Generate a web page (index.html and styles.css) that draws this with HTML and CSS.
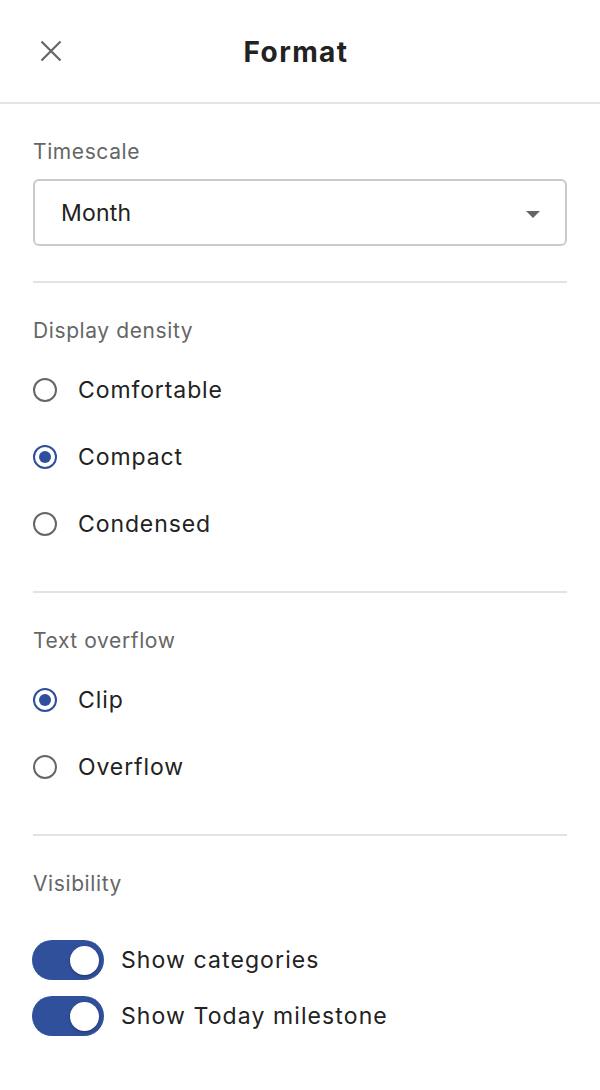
FILE: index.html
```html
<!DOCTYPE html>
<html lang="en">
<head>
  <meta charset="UTF-8" />
  <meta name="viewport" content="width=device-width, initial-scale=1.0"/>
  <title>Format</title>
  <link rel="stylesheet" href="styles.css">
</head>
<body>

  <header class="top-bar">
    <button class="close-btn" aria-label="Close">
      <svg width="22" height="22" viewBox="0 0 22 22">
        <path d="M1.5 1.5 L20.5 20.5 M20.5 1.5 L1.5 20.5" stroke="#666" stroke-width="2.2" fill="none"/>
      </svg>
    </button>
    <h1>Format</h1>
    <span></span>
  </header>

  <main class="panel">
    <section class="group">
      <div class="group-label">Timescale</div>
      <div class="select">
        <span>Month</span>
        <span class="caret"></span>
      </div>
    </section>

    <section class="group">
      <div class="group-label">Display density</div>
      <div class="radio-list">
        <label class="radio-row"><span class="radio"></span>Comfortable</label>
        <label class="radio-row"><span class="radio checked"></span>Compact</label>
        <label class="radio-row"><span class="radio"></span>Condensed</label>
      </div>
    </section>

    <section class="group">
      <div class="group-label">Text overflow</div>
      <div class="radio-list">
        <label class="radio-row"><span class="radio checked"></span>Clip</label>
        <label class="radio-row"><span class="radio"></span>Overflow</label>
      </div>
    </section>

    <section class="group last">
      <div class="group-label">Visibility</div>
      <div class="toggle-list">
        <label class="toggle-row"><span class="toggle on"><span class="knob"></span></span>Show categories</label>
        <label class="toggle-row"><span class="toggle on"><span class="knob"></span></span>Show Today milestone</label>
      </div>
    </section>
  </main>

</body>
</html>
```

FILE: styles.css
```css
body {
  margin: 0;
  font-family: Inter, "Noto Sans", sans-serif;
  background-color: #ffffff;
  color: #222;
}

.top-bar {
  display: grid;
  grid-template-columns: 1fr auto 1fr;
  align-items: center;
  height: 102px;
  padding: 0 40px;
  border-bottom: 2px solid #e3e3e3;
}

.close-btn {
  justify-self: start;
  display: flex;
  padding: 0;
  border: none;
  background: none;
  cursor: pointer;
}

.top-bar h1 {
  margin: 0 0 0 -8px;
  font-size: 28px;
  font-weight: 700;
  letter-spacing: 1.4px;
  color: #222;
  padding-top: 2px;
}

.panel {
  padding: 0 33px;
}

.group {
  padding: 34px 0 34px;
  border-bottom: 2px solid #e3e3e3;
}

.group.last {
  border-bottom: none;
}

.group-label {
  font-size: 21px;
  line-height: 28px;
  letter-spacing: 0.6px;
  color: #666;
}

.select {
  display: flex;
  align-items: center;
  justify-content: space-between;
  height: 63px;
  margin: 13px 0 1px;
  padding: 0 25px 0 26px;
  border: 2px solid #cacaca;
  border-radius: 6px;
  font-size: 23px;
  letter-spacing: 0.2px;
}

.caret {
  width: 0;
  height: 0;
  border-left: 7px solid transparent;
  border-right: 7px solid transparent;
  border-top: 7px solid #666;
  margin-top: 3px;
}

.radio-list {
  margin-top: 11px;
}

.radio-row {
  display: flex;
  align-items: center;
  gap: 21px;
  height: 67px;
  font-size: 23px;
  letter-spacing: 0.9px;
}

.radio {
  box-sizing: border-box;
  width: 24px;
  height: 24px;
  border: 2px solid #666;
  border-radius: 50%;
  display: flex;
  align-items: center;
  justify-content: center;
}

.radio.checked {
  border-color: #2f4f9c;
}

.radio.checked::after {
  content: "";
  width: 12px;
  height: 12px;
  border-radius: 50%;
  background-color: #2f4f9c;
}

.toggle-list {
  display: flex;
  flex-direction: column;
  gap: 16px;
  margin-top: 42px;
}

.toggle-row {
  display: flex;
  align-items: center;
  gap: 17px;
  font-size: 23px;
  letter-spacing: 1.1px;
}

.toggle {
  box-sizing: border-box;
  width: 72px;
  height: 40px;
  margin-left: -1px;
  border-radius: 20px;
  background-color: #30509c;
  display: flex;
  align-items: center;
  justify-content: flex-end;
  padding-right: 5px;
}

.knob {
  width: 29px;
  height: 29px;
  border-radius: 50%;
  background-color: #fff;
  box-shadow: 0 1px 3px rgba(0, 0, 0, 0.35);
}
```
